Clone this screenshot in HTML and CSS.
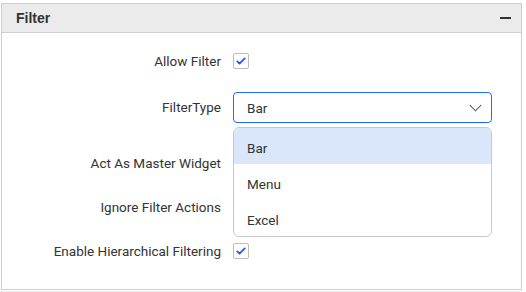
FILE: index.html
```html
<!DOCTYPE html>
<html lang="en">
<head>
  <meta charset="UTF-8" />
  <title>Filter properties</title>
  <link rel="stylesheet" href="styles.css">
</head>
<body>
  <div class="panel">
    <div class="panel-header">
      <span class="panel-title">Filter</span>
      <span class="collapse-icon"></span>
    </div>

    <div class="form">
      <label class="field-label">Allow Filter</label>
      <div class="field"><span class="checkbox checked"><svg viewBox="0 0 16 16" width="12" height="12"><path d="M3 8.5l3 3 7-7" fill="none" stroke="#1a5cf4" stroke-width="2.4" stroke-linecap="round" stroke-linejoin="round"/></svg></span></div>

      <label class="field-label">FilterType</label>
      <div class="field">
        <div class="dropdown">
          <div class="select">
            <span>Bar</span>
            <svg class="chevron" viewBox="0 0 14 8" width="13" height="8"><path d="M1 1l6 6 6-6" fill="none" stroke="#555" stroke-width="1.1"/></svg>
          </div>
          <ul class="popup">
            <li class="option selected">Bar</li>
            <li class="option">Menu</li>
            <li class="option">Excel</li>
          </ul>
        </div>
      </div>

      <label class="field-label">Act As Master Widget</label>
      <div class="field"></div>

      <label class="field-label">Ignore Filter Actions</label>
      <div class="field"></div>

      <label class="field-label">Enable Hierarchical Filtering</label>
      <div class="field"><span class="checkbox checked"><svg viewBox="0 0 16 16" width="12" height="12"><path d="M3 8.5l3 3 7-7" fill="none" stroke="#1a5cf4" stroke-width="2.4" stroke-linecap="round" stroke-linejoin="round"/></svg></span></div>
    </div>
  </div>

  <div class="next-header"></div>
</body>
</html>
```

FILE: styles.css
```css
body {
  margin: 3px 0 0 1px;
  background-color: #fff;
  font-family: Roboto, "Liberation Sans", sans-serif;
  color: #333;
}

.panel {
  width: 519px;
  border: 1px solid #cfcfcf;
}

.panel-header {
  display: flex;
  align-items: center;
  justify-content: space-between;
  height: 28px;
  padding: 0 10px 0 14px;
  background-color: #ebebeb;
  border-bottom: 1px solid #cfcfcf;
}

.panel-title {
  font-family: "Liberation Sans", Arial, sans-serif;
  font-weight: bold;
  font-size: 14px;
  color: #333;
}

.collapse-icon {
  width: 11px;
  height: 2px;
  background-color: #333;
}

.form {
  display: grid;
  grid-template-columns: 219px 1fr;
  grid-template-rows: 24px 68px 44px 44px 44px;
  column-gap: 12px;
  align-items: center;
  padding: 16px 0;
}

.field-label {
  text-align: right;
  font-size: 13.5px;
  color: #333;
}

.field {
  display: flex;
  align-items: center;
}

.checkbox {
  display: flex;
  align-items: center;
  justify-content: center;
  width: 14px;
  height: 14px;
  border: 1px solid #bdbdbd;
  border-radius: 2px;
  background-color: #fff;
}

.dropdown {
  position: relative;
  width: 259px;
}

.select {
  display: flex;
  align-items: center;
  justify-content: space-between;
  height: 29px;
  padding: 2px 9px 0 13px;
  box-sizing: border-box;
  height: 31px;
  border: 1px solid #1a6ef5;
  border-radius: 4px;
  font-size: 13.5px;
}

.popup {
  position: absolute;
  top: 35px;
  left: 0;
  right: 0;
  margin: 0;
  padding: 0;
  list-style: none;
  background-color: #fff;
  border: 1px solid #c8c8c8;
  border-radius: 6px;
  overflow: hidden;
}

.option {
  height: 32px;
  line-height: 32px;
  padding: 4px 0 0 13px;
  font-size: 13.5px;
  color: #333;
}

.option.selected {
  background-color: #dae7fb;
}

.next-header {
  width: 521px;
  height: 10px;
  background-color: #ebebeb;
  margin-top: 1px;
}
```
